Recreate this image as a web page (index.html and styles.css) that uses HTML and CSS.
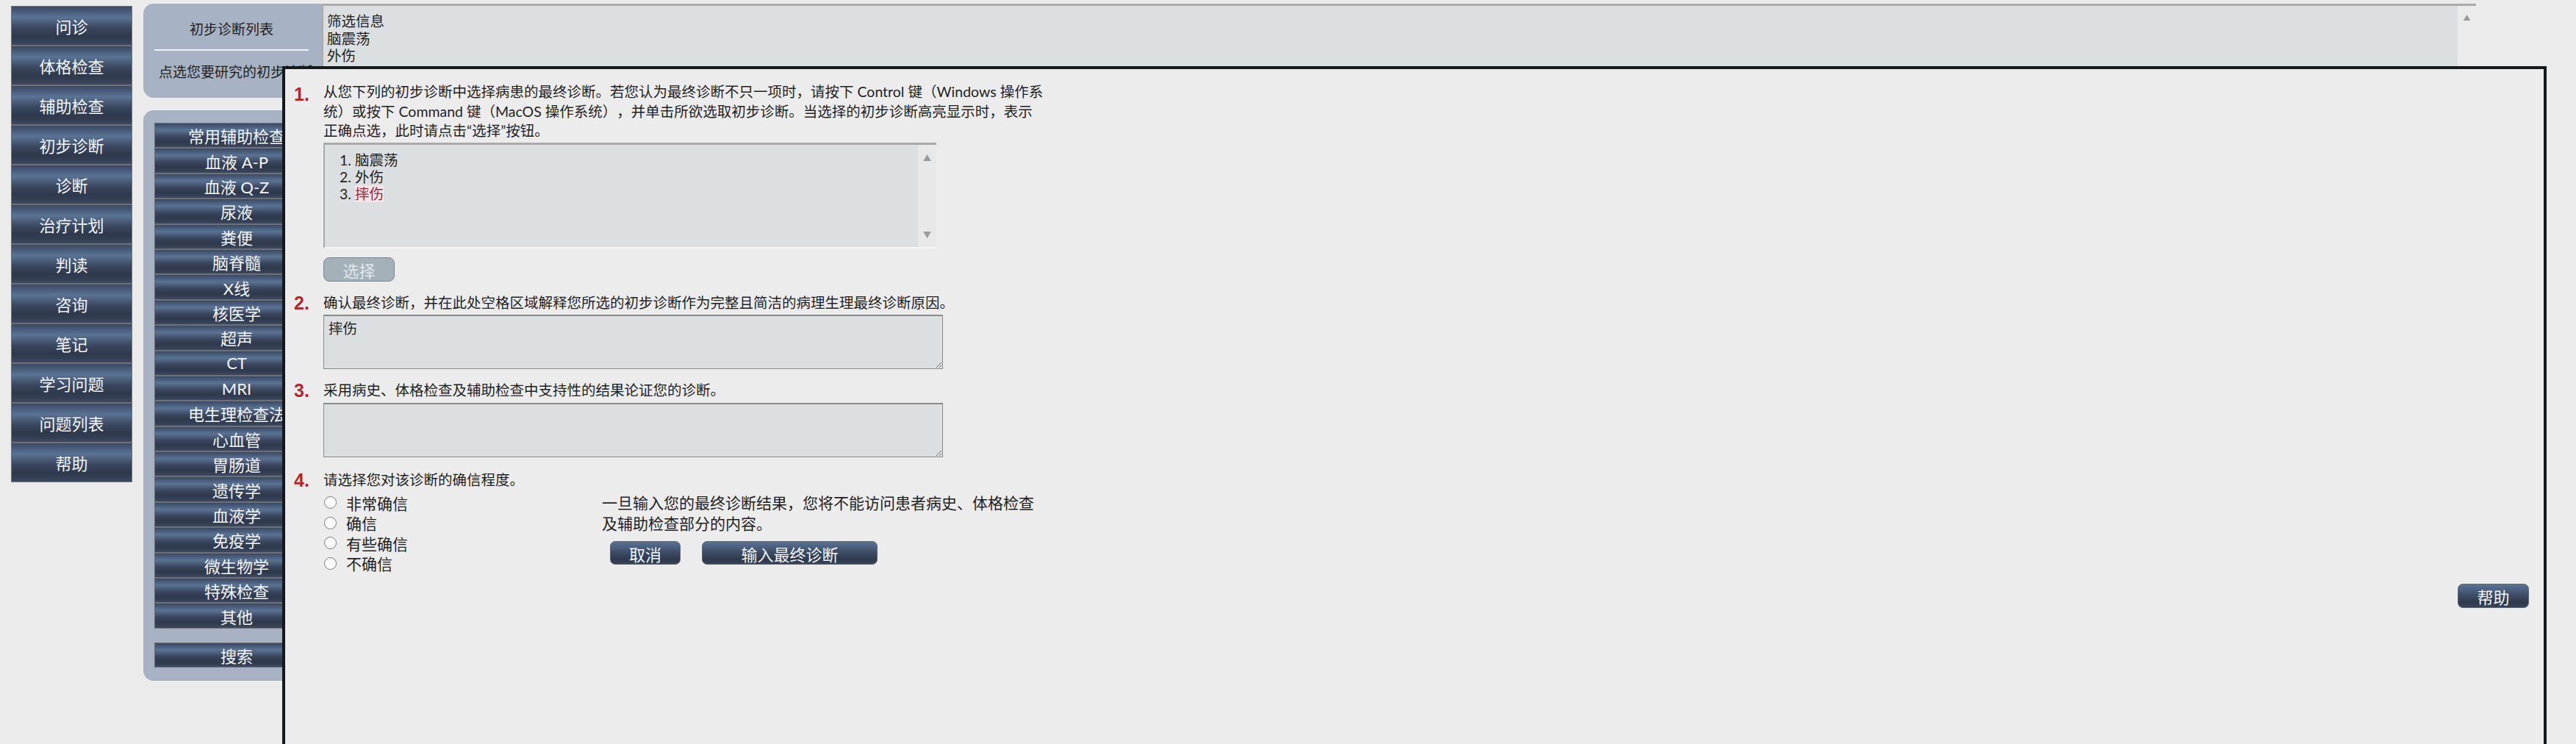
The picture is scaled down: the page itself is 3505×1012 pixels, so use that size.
FILE: index.html
```html
<!DOCTYPE html>
<html lang="zh-CN">
<head>
  <meta charset="UTF-8">
  <title>诊断</title>
  <link rel="stylesheet" href="styles.css">
</head>
<body>

  <div class="page">
    <nav class="side-nav">
      <button class="gloss">问诊</button>
      <button class="gloss">体格检查</button>
      <button class="gloss">辅助检查</button>
      <button class="gloss">初步诊断</button>
      <button class="gloss">诊断</button>
      <button class="gloss">治疗计划</button>
      <button class="gloss">判读</button>
      <button class="gloss">咨询</button>
      <button class="gloss">笔记</button>
      <button class="gloss">学习问题</button>
      <button class="gloss">问题列表</button>
      <button class="gloss">帮助</button>
    </nav>

    <div class="main">
      <div class="top-row">
        <div class="panel panel-head">
          <div class="panel-title">初步诊断列表</div>
          <div class="panel-note">点选您要研究的初步诊断</div>
        </div>
        <div class="dx-list">
          <ul>
            <li>筛选信息</li>
            <li>脑震荡</li>
            <li>外伤</li>
          </ul>
          <div class="scroll-col"><span>&#9650;</span></div>
        </div>
      </div>

      <div class="panel panel-tests">
        <button class="gloss">常用辅助检查</button>
        <button class="gloss">血液 A-P</button>
        <button class="gloss">血液 Q-Z</button>
        <button class="gloss">尿液</button>
        <button class="gloss">粪便</button>
        <button class="gloss">脑脊髓</button>
        <button class="gloss">X线</button>
        <button class="gloss">核医学</button>
        <button class="gloss">超声</button>
        <button class="gloss">CT</button>
        <button class="gloss">MRI</button>
        <button class="gloss">电生理检查法</button>
        <button class="gloss">心血管</button>
        <button class="gloss">胃肠道</button>
        <button class="gloss">遗传学</button>
        <button class="gloss">血液学</button>
        <button class="gloss">免疫学</button>
        <button class="gloss">微生物学</button>
        <button class="gloss">特殊检查</button>
        <button class="gloss">其他</button>
        <button class="gloss search-btn">搜索</button>
      </div>
    </div>
  </div>

  <div class="modal">
    <div class="question">
      <div class="q-num q-first">1.</div>
      <div class="q-body">
        <div class="q-text">从您下列的初步诊断中选择病患的最终诊断。若您认为最终诊断不只一项时，请按下 Control 键（Windows 操作系统）或按下 Command 键（MacOS 操作系统），并单击所欲选取初步诊断。当选择的初步诊断高亮显示时，表示正确点选，此时请点击“选择”按钮。</div>
        <div class="pick-list">
          <ol>
            <li>脑震荡</li>
            <li>外伤</li>
            <li><span class="picked">摔伤</span></li>
          </ol>
          <div class="scroll-col"><span>&#9650;</span><span>&#9660;</span></div>
        </div>
        <button class="btn-select" disabled>选择</button>
      </div>
    </div>

    <div class="question">
      <div class="q-num">2.</div>
      <div class="q-body">
        <div class="q-text">确认最终诊断，并在此处空格区域解释您所选的初步诊断作为完整且简洁的病理生理最终诊断原因。</div>
        <textarea class="answer">摔伤</textarea>
      </div>
    </div>

    <div class="question">
      <div class="q-num">3.</div>
      <div class="q-body">
        <div class="q-text">采用病史、体格检查及辅助检查中支持性的结果论证您的诊断。</div>
        <textarea class="answer"></textarea>
      </div>
    </div>

    <div class="question q-last">
      <div class="q-num">4.</div>
      <div class="q-body">
        <div class="q-text">请选择您对该诊断的确信程度。</div>
        <div class="confirm-row">
          <div class="levels">
            <label><input type="radio" name="level">非常确信</label>
            <label><input type="radio" name="level">确信</label>
            <label><input type="radio" name="level">有些确信</label>
            <label><input type="radio" name="level">不确信</label>
          </div>
          <div class="final-note">
            <p>一旦输入您的最终诊断结果，您将不能访问患者病史、体格检查及辅助检查部分的内容。</p>
            <div class="final-actions">
              <button class="btn-dark btn-cancel">取消</button>
              <button class="btn-dark btn-final">输入最终诊断</button>
            </div>
          </div>
        </div>
      </div>
    </div>

    <div class="help-row">
      <button class="btn-dark btn-help">帮助</button>
    </div>
  </div>

</body>
</html>
```

FILE: styles.css
```css
html, body {
  margin: 0;
  padding: 0;
  height: 100%;
  overflow: hidden;
}

body {
  position: relative;
  background-color: #ebebeb;
  font-family: Lato, "Noto Sans CJK SC", sans-serif;
  color: #1f1f1f;
}

button {
  font-family: Lato, "Noto Sans CJK SC", sans-serif;
  padding: 0;
  cursor: pointer;
}

.page {
  display: flex;
  align-items: flex-start;
  padding: 5px 0 0 15px;
}

/* glossy blue buttons */
.gloss {
  display: block;
  box-sizing: border-box;
  width: 100%;
  border: 1px solid #6d7176;
  background: linear-gradient(to bottom, #3b4963 0%, #4a5d7b 14%, #5a7394 28%, #4b5c78 42%, #3a465e 56%, #2f394d 76%, #333e53 88%, #3d4960 100%);
  color: #f1f4f8;
  text-align: center;
  white-space: nowrap;
}

.side-nav {
  width: 165px;
  margin-top: 3px;
}

.side-nav .gloss {
  height: 54px;
  font-size: 22px;
}

.main {
  margin-left: 15px;
}

.top-row {
  display: flex;
}

.panel {
  background-color: #a7b2c4;
}

.panel-head {
  width: 243px;
  height: 128px;
  box-sizing: border-box;
  padding: 0 18px 0 15px;
  border-radius: 14px 0 0 14px;
  font-size: 19px;
}

.panel-title {
  height: 64px;
  box-sizing: border-box;
  padding-top: 22px;
  line-height: 26px;
  text-align: center;
  border-bottom: 2px solid #eef1f5;
}

.panel-note {
  margin-top: 16px;
  padding-left: 6px;
  line-height: 26px;
  white-space: nowrap;
}

.dx-list {
  display: flex;
  width: 2931px;
  height: 128px;
  box-sizing: border-box;
  background-color: #dcdfe2;
  border-top: 3px solid #ababab;
  border-left: 2px solid #ababab;
}

.dx-list ul {
  flex: 1;
  margin: 0;
  padding: 9px 0 0 5px;
  list-style: none;
  font-size: 19.5px;
  line-height: 23.5px;
}

.scroll-col {
  display: flex;
  flex-direction: column;
  justify-content: space-between;
  align-items: center;
  width: 25px;
  background-color: #ebebeb;
  color: #9a9a9a;
  font-size: 10px;
  padding: 9px 0;
  box-sizing: border-box;
}

.dx-list .scroll-col {
  justify-content: flex-start;
  padding-top: 8px;
}

.panel-tests {
  width: 254px;
  margin-top: 17px;
  padding: 17px 15px 18px;
  box-sizing: border-box;
  border-radius: 14px;
}

.panel-tests .gloss {
  height: 34.4px;
  font-size: 22px;
}

.panel-tests .search-btn {
  margin-top: 19px;
  height: 34px;
}

/* final diagnosis dialog */
.modal {
  position: absolute;
  left: 384px;
  top: 90px;
  width: 3081px;
  height: 1000px;
  box-sizing: border-box;
  border: 4px solid #121a1e;
  background-color: #ececec;
  padding: 18px 20px 0 12px;
}

.question {
  display: flex;
}

.question + .question {
  margin-top: 16px;
}

.q-last {
  margin-top: 18px !important;
}

.q-num {
  width: 40px;
  flex: none;
  font-family: "Liberation Sans", Arial, sans-serif;
  font-weight: bold;
  font-size: 25px;
  line-height: 27px;
  color: #b3282d;
}

.q-first {
  padding-top: 3px;
}

.q-body {
  width: 980px;
  flex: none;
}

.q-text {
  font-size: 19.5px;
  line-height: 26.5px;
  text-spacing-trim: space-all;
}

.pick-list {
  display: flex;
  width: 834px;
  height: 144px;
  margin-top: 2px;
  box-sizing: border-box;
  background-color: #dcdfe2;
  border-top: 3px solid #a9a9a9;
  border-left: 2px solid #a9a9a9;
  border-bottom: 2px solid #f6f6f6;
}

.pick-list ol {
  flex: 1;
  margin: 0;
  padding: 9px 0 0 20px;
  list-style-position: inside;
  font-size: 19.5px;
  line-height: 23px;
}

.pick-list .scroll-col {
  background-color: #e8e8e8;
  font-size: 11px;
}

.picked {
  background-color: #f4e5e8;
  color: #8d2b47;
}

.btn-select {
  display: block;
  margin-top: 12px;
  width: 97px;
  height: 33px;
  border: 1px solid #7c878d;
  border-radius: 8px;
  background-color: #a4b1b9;
  color: #e1e7ea;
  font-size: 22px;
}

.answer {
  display: block;
  width: 843px;
  height: 74px;
  margin: 3px 0 0;
  box-sizing: border-box;
  padding: 4px 6px;
  background-color: #dcdfe2;
  border: 1px solid #8a8a8a;
  border-top-width: 2px;
  font-family: Lato, "Noto Sans CJK SC", sans-serif;
  font-size: 19.5px;
  line-height: 26px;
  color: #1f1f1f;
}

.confirm-row {
  display: flex;
  margin-top: 4px;
  font-size: 21px;
}

.levels {
  width: 379px;
}

.levels label {
  display: flex;
  align-items: center;
  height: 27.5px;
}

.levels input {
  width: 17px;
  height: 17px;
  margin: 0 13px 0 1px;
}

.final-note {
  width: 598px;
}

.final-note p {
  margin: 0;
  line-height: 27.5px;
}

.final-actions {
  display: flex;
  gap: 29px;
  margin: 11px 0 0 11px;
}

.btn-dark {
  height: 32px;
  border: 1px solid #5f6770;
  border-radius: 7px;
  background: linear-gradient(to bottom, #5a7192 0%, #4b5f7e 25%, #3c4a63 50%, #2f394d 80%, #394459 100%);
  color: #f0f4f8;
  font-size: 22px;
}

.btn-cancel {
  width: 96px;
}

.btn-final {
  width: 239px;
}

.help-row {
  display: flex;
  justify-content: flex-end;
  margin-top: 14px;
}

.btn-help {
  width: 97px;
  height: 33px;
}
```
